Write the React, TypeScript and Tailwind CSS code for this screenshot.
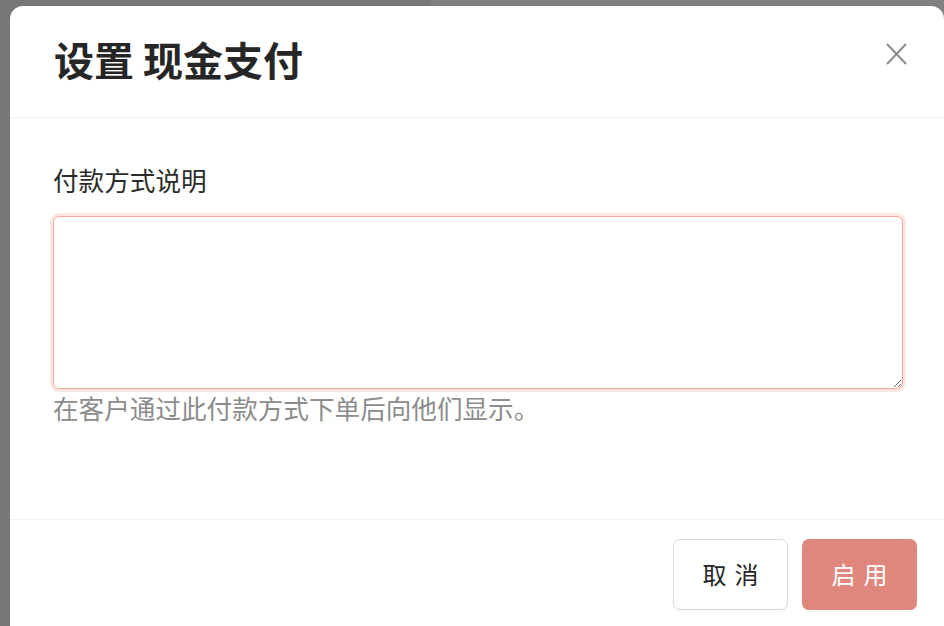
import React from "react";

const font = '"Noto Sans CJK SC", "Noto Sans", sans-serif';

export default function App() {
  return (
    <div className="relative h-[626px] w-[944px] overflow-hidden flex" style={{ fontFamily: font }}>
      <div className="w-[431px] h-full bg-[#777777]" />
      <div className="flex-1 h-full bg-[#808080]" />
      <div className="absolute left-[10px] top-[6px] w-[934px] h-[640px] bg-white rounded-[13px] flex flex-col">
        <div className="h-[112px] shrink-0 flex items-center justify-between pl-[44px] pr-[37px] border-b border-[#f0f0f0]">
          <h1 className="text-[40px] leading-[1.4] font-bold text-[#262626] mb-[5px]">设置 现金支付</h1>
          <svg width="21" height="22" viewBox="0 0 21 22" className="mb-[16px]">
            <line x1="1" y1="1" x2="20" y2="21" stroke="#8c8c8c" strokeWidth="2" />
            <line x1="20" y1="1" x2="1" y2="21" stroke="#8c8c8c" strokeWidth="2" />
          </svg>
        </div>
        <div className="h-[402px] shrink-0 pl-[43px] pr-[41px] pt-[43px] flex flex-col border-b border-[#f0f0f0]">
          <label className="text-[25.6px] leading-[38px] text-[#2b2b2b]">付款方式说明</label>
          <textarea
            className="mt-[17px] h-[173px] w-full rounded-[6px] border border-[#f2aaa0] shadow-[0_0_0_3px_#fde7e3] outline-none bg-white"
            style={{ fontFamily: font }}
          />
          <p className="text-[25.6px] leading-[38px] text-[#8c8c8c]">在客户通过此付款方式下单后向他们显示。</p>
        </div>
        <div className="flex justify-end gap-[14px] pt-[19px] pr-[27px]">
          <button className="w-[115px] h-[71px] rounded-[7px] border border-[#d9d9d9] bg-white text-[24px] leading-none pb-[2px] text-[#262626] tracking-[0.34em] pl-[0.34em] shadow-[0_2px_0_rgba(0,0,0,0.02)]">
            取消
          </button>
          <button className="w-[115px] h-[71px] rounded-[7px] bg-[#e0877d] text-[24px] leading-none pb-[2px] text-white tracking-[0.34em] pl-[0.34em] shadow-[0_2px_0_rgba(0,0,0,0.04)]">
            启用
          </button>
        </div>
      </div>
    </div>
  );
}
